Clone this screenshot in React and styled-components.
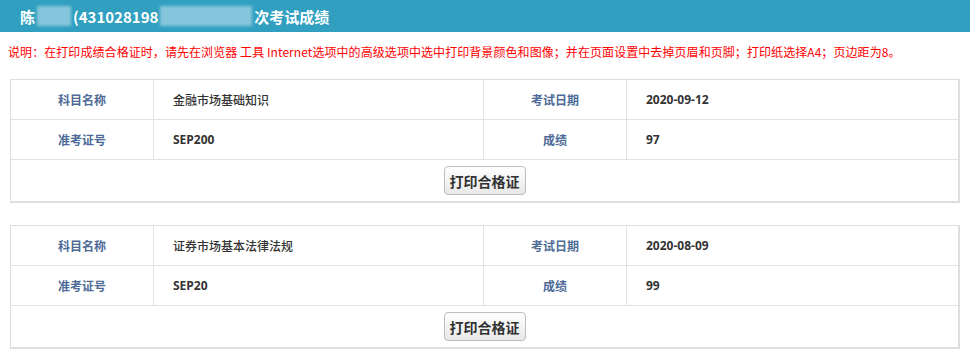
import React from "react";
import styled, { createGlobalStyle } from "styled-components";

const GlobalStyle = createGlobalStyle`
  body {
    margin: 0;
    background: #fff;
    font-family: "Noto Sans CJK SC", "Noto Sans", "Liberation Sans", sans-serif;
  }
`;

const records = [
  {
    subject: "金融市场基础知识",
    date: "2020-09-12",
    ticket: "SEP200",
    score: "97",
  },
  {
    subject: "证券市场基本法律法规",
    date: "2020-08-09",
    ticket: "SEP20",
    score: "99",
  },
];

function App() {
  return (
    <Page>
      <GlobalStyle />
      <TitleBar>
        <span>陈</span>
        <Mask $w={34} />
        <span>(431028198</span>
        <Mask $w={92} />
        <span>次考试成绩</span>
      </TitleBar>
      <Notice>
        说明：在打印成绩合格证时，请先在浏览器 工具 Internet选项中的高级选项中选中打印背景颜色和图像；并在页面设置中去掉页眉和页脚；打印纸选择A4；页边距为8。
      </Notice>
      {records.map((rec) => (
        <ScoreTable key={rec.subject}>
          <Label>科目名称</Label>
          <Value $regular>{rec.subject}</Value>
          <Label>考试日期</Label>
          <Value $last>{rec.date}</Value>
          <Label>准考证号</Label>
          <Value>{rec.ticket}</Value>
          <Label>成绩</Label>
          <Value $last>{rec.score}</Value>
          <ButtonRow>
            <PrintButton type="button">打印合格证</PrintButton>
          </ButtonRow>
        </ScoreTable>
      ))}
    </Page>
  );
}

export default App;

const Page = styled.div`
  width: 970px;
  height: 360px;
  overflow: hidden;
`;

const TitleBar = styled.div`
  height: 32px;
  background: #31a0c0;
  color: #fff;
  font-size: 15px;
  font-weight: bold;
  display: flex;
  align-items: center;
  padding-left: 20px;
  box-sizing: border-box;
`;

const Mask = styled.span`
  display: inline-block;
  width: ${(p) => p.$w}px;
  height: 20px;
  margin: 0 2px;
  background: #8fcade;
  filter: blur(1.5px);
  opacity: 0.9;
`;

const Notice = styled.div`
  color: #ff0000;
  font-size: 12px;
  padding: 11px 8px 0;
  height: 36px;
  line-height: 17px;
  box-sizing: border-box;
  white-space: nowrap;
  letter-spacing: 0.07px;
`;

const ScoreTable = styled.div`
  margin: 11px 10px 22px;
  width: 950px;
  box-sizing: border-box;
  display: grid;
  grid-template-columns: 143px 330px 143px 1fr;
  border: 1px solid #dedede;
  border-right-width: 2px;
  border-bottom-width: 2px;
  font-size: 12px;
`;

const Cell = styled.div`
  height: 40px;
  box-sizing: border-box;
  border-bottom: 1px solid #e2e2e2;
  display: flex;
  align-items: center;
`;

const Label = styled(Cell)`
  justify-content: center;
  border-right: 1px solid #e2e2e2;
  color: #4d6b96;
  font-weight: bold;
`;

const Value = styled(Cell)`
  padding-left: 19px;
  border-right: ${(p) => (p.$last ? "none" : "1px solid #e2e2e2")};
  color: #333;
  font-weight: ${(p) => (p.$regular ? 500 : "bold")};
  font-family: ${(p) =>
    p.$regular
      ? `"Noto Sans CJK SC", sans-serif`
      : `"Open Sans", "Noto Sans CJK SC", sans-serif`};
`;

const ButtonRow = styled.div`
  grid-column: 1 / -1;
  height: 41px;
  display: flex;
  align-items: center;
  justify-content: center;
`;

const PrintButton = styled.button`
  height: 29px;
  padding: 0 5px;
  border: 1px solid #bcbcbc;
  border-radius: 4px;
  background: linear-gradient(#ffffff, #e8e8e8);
  color: #333;
  font-size: 14px;
  font-weight: bold;
  font-family: "Noto Sans CJK SC", sans-serif;
  cursor: pointer;
`;
